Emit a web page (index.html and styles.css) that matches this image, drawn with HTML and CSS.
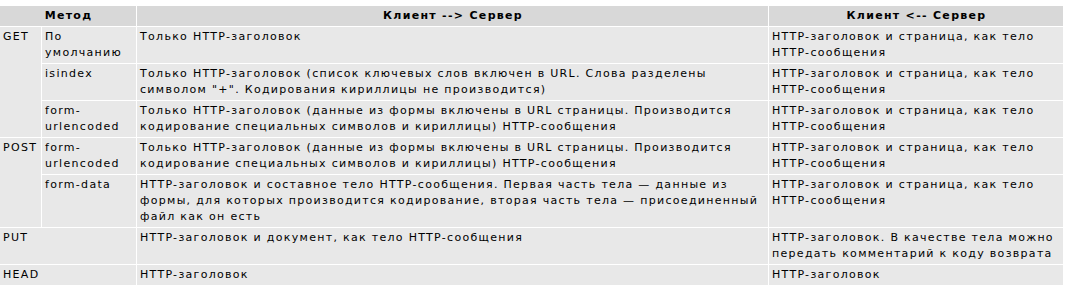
FILE: index.html
```html
<!DOCTYPE html>
<html lang="ru">
<head>
<meta charset="utf-8">
<link rel="stylesheet" href="styles.css">
</head>
<body>
<table class="methods">
  <colgroup>
    <col class="c-method">
    <col class="c-kind">
    <col class="c-req">
    <col class="c-resp">
  </colgroup>
  <thead>
    <tr>
      <th colspan="2">Метод</th>
      <th>Клиент --&gt; Сервер</th>
      <th>Клиент &lt;-- Сервер</th>
    </tr>
  </thead>
  <tbody>
    <tr>
      <td rowspan="3">GET</td>
      <td>По умолчанию</td>
      <td>Только HTTP-заголовок</td>
      <td>HTTP-заголовок и страница, как тело HTTP-сообщения</td>
    </tr>
    <tr>
      <td>isindex</td>
      <td>Только HTTP-заголовок (список ключевых слов включен в URL. Слова разделены символом "+". Кодирования кириллицы не производится)</td>
      <td>HTTP-заголовок и страница, как тело HTTP-сообщения</td>
    </tr>
    <tr>
      <td>form-urlencoded</td>
      <td>Только HTTP-заголовок (данные из формы включены в URL страницы. Производится кодирование специальных символов и кириллицы) HTTP-сообщения</td>
      <td>HTTP-заголовок и страница, как тело HTTP-сообщения</td>
    </tr>
    <tr>
      <td rowspan="2">POST</td>
      <td>form-urlencoded</td>
      <td>Только HTTP-заголовок (данные из формы включены в URL страницы. Производится кодирование специальных символов и кириллицы) HTTP-сообщения</td>
      <td>HTTP-заголовок и страница, как тело HTTP-сообщения</td>
    </tr>
    <tr>
      <td>form-data</td>
      <td>HTTP-заголовок и составное тело HTTP-сообщения. Первая часть тела — данные из формы, для которых производится кодирование, вторая часть тела — присоединенный файл как он есть</td>
      <td>HTTP-заголовок и страница, как тело HTTP-сообщения</td>
    </tr>
    <tr>
      <td colspan="2">PUT</td>
      <td>HTTP-заголовок и документ, как тело HTTP-сообщения</td>
      <td>HTTP-заголовок. В качестве тела можно передать комментарий к коду возврата</td>
    </tr>
    <tr>
      <td colspan="2">HEAD</td>
      <td>HTTP-заголовок</td>
      <td>HTTP-заголовок</td>
    </tr>
  </tbody>
</table>
</body>
</html>
```

FILE: styles.css
```css
html, body {
  margin: 0;
  padding: 0;
  background: #ffffff;
}

.methods {
  margin: 5px 0 0 -1px;
  border-collapse: separate;
  border-spacing: 1px;
  table-layout: fixed;
  width: 1065px;
  font-family: "DejaVu Sans", Verdana, sans-serif;
  font-size: 11px;
  letter-spacing: 1.3px;
  line-height: 16px;
  color: #000000;
}

.c-method { width: 41px; }
.c-kind { width: 94px; }
.c-req { width: 631px; }
.c-resp { width: 294px; }

.methods th,
.methods td {
  padding: 2px 2px 2px 3px;
  vertical-align: top;
  text-align: left;
}

.methods th {
  background: #d8d8d8;
  font-weight: bold;
  text-align: center;
}

.methods td {
  background: #e8e8e8;
}
```
